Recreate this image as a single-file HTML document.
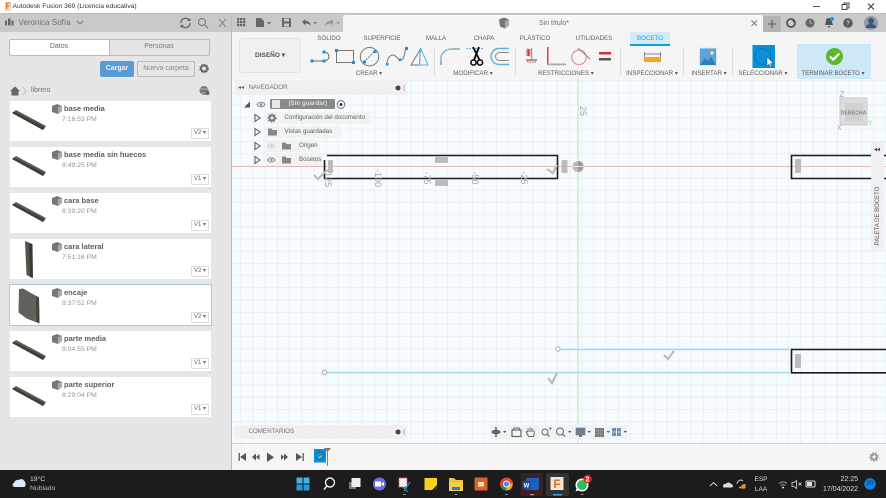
<!DOCTYPE html>
<html lang="es"><head><meta charset="utf-8"><title>Fusion 360</title>
<style>
html,body{margin:0;padding:0;width:886px;height:498px;overflow:hidden;background:#fff}
#r{position:absolute;left:0;top:0;width:886px;height:498px;overflow:hidden;font-family:"Liberation Sans",sans-serif;filter:blur(.3px)}
#r div,#r span.a{position:absolute}
.t{white-space:nowrap;color:#666;font-size:6.5px;line-height:10px}
.c{transform:translateX(-50%)}
.card{left:10px;width:201px;height:40px;background:#fff}
.thumb{position:absolute;left:0;top:0}
.ct{left:54px;top:2.5px;font-size:7.5px;font-weight:bold;color:#5c5c5c;line-height:10px;white-space:nowrap}
.cs{left:52px;top:14px;font-size:6.8px;color:#959595;line-height:10px;white-space:nowrap}
.cv{left:181px;top:27px;width:16px;height:9px;background:#fff;border:1px solid #ddd;font-size:6px;line-height:9px;color:#666;text-align:center;box-sizing:content-box;border-radius:1px}
.cube{left:42px;top:3px}
.lab{top:68.5px;font-size:6.2px;color:#5c5c5c;white-space:nowrap;line-height:10px;transform:translateX(-50%)}
.tab{top:33.5px;font-size:6.2px;color:#5c5c5c;white-space:nowrap;line-height:10px;transform:translateX(-50%)}
.sep{top:47px;width:1px;height:29px;background:#dcdcdc}
.row{height:12px;background:#f1f3f3}
.rt{font-size:6.2px;color:#5c5c5c;line-height:12px;white-space:nowrap}
.ax{font-size:9px;color:#a5a5a5;white-space:nowrap;line-height:10px;transform:translate(-50%,-50%) rotate(90deg)}
svg{position:absolute;overflow:visible}
</style></head><body><div id="r">

<!-- title bar -->
<div style="left:0;top:0;width:886px;height:13px;background:#fff"></div>
<div style="left:5px;top:2px;width:6px;height:9px;background:#f2dcc4;color:#d9731c;font-size:9px;font-weight:bold;line-height:9px;text-align:center">F</div>
<div class="t" style="left:12.5px;top:2px;font-size:6.7px;color:#333">Autodesk Fusion 360 (Licencia educativa)</div>
<svg style="left:0;top:0" width="886" height="13"><path d="M813 6.5h7" stroke="#555" stroke-width="1"/><path d="M842 4.5h5v5h-5zM844 4.500v-1.500h5v5h-2" stroke="#444" fill="none" stroke-width="1"/><path d="M868 3.500l6 6M874 3.500l-6 6" stroke="#333" stroke-width="1"/></svg>
<div style="left:0;top:13px;width:886px;height:1.500px;background:#bdbdbd"></div>

<!-- left panel -->
<div style="left:0;top:14px;width:231px;height:456px;background:#e6e6e6"></div>
<div style="left:0;top:14px;width:231px;height:18px;background:#c9c9c9"></div>
<svg style="left:0;top:14px" width="231" height="18">
<g fill="#666"><rect x="5" y="6.500" width="2" height="5"/><rect x="8" y="4.500" width="2.500" height="7"/><rect x="11.500" y="6.500" width="2" height="5"/></g>
<path d="M77 7l3 3 3-3" stroke="#777" fill="none" stroke-width="1"/>
<path d="M190 9a4.500 4.500 0 0 1-8 3M181 9a4.500 4.500 0 0 1 8-3" stroke="#666" fill="none" stroke-width="1.300"/><path d="M187 7h3.500v-3zM184 11h-3.500v3z" fill="#666"/>
<circle cx="202" cy="8" r="3.500" stroke="#777" fill="none" stroke-width="1"/><path d="M205 11l3 3" stroke="#777" stroke-width="1.200"/>
<path d="M219 5l7 8M226 5l-7 8" stroke="#888" stroke-width="1"/></svg>
<div class="t" style="left:18.500px;top:17.500px;font-size:8px;color:#707070">Veronica Sofía</div>

<div style="left:9px;top:39px;width:101px;height:17px;background:#fff;border:1px solid #bbb;box-sizing:border-box;border-radius:2px 0 0 2px"></div>
<div style="left:109px;top:39px;width:101px;height:17px;background:#e6e6e6;border:1px solid #bbb;box-sizing:border-box;border-radius:0 2px 2px 0"></div>
<div class="t c" style="left:59px;top:42px;color:#666;font-size:7px">Datos</div>
<div class="t c" style="left:159px;top:42px;color:#777;font-size:7px">Personas</div>
<div style="left:100px;top:61px;width:34px;height:16px;background:#5b9bd5;border-radius:2px"></div>
<div class="t c" style="left:117px;top:64px;color:#eef;font-size:7px;font-weight:bold">Cargar</div>
<div style="left:137px;top:61px;width:58px;height:16px;border:1px solid #bbb;box-sizing:border-box;border-radius:2px"></div>
<div class="t c" style="left:166px;top:64px;color:#888;font-size:7px">Nueva carpeta</div>
<svg style="left:199px;top:63px" width="12" height="12"><circle cx="5" cy="5.500" r="3" fill="none" stroke="#666" stroke-width="2"/><circle cx="5" cy="5.500" r="4.200" fill="none" stroke="#666" stroke-width="1.200" stroke-dasharray="1.400 1.400"/></svg>
<svg style="left:9px;top:85px" width="40" height="12"><path d="M1 6l5-4.500 5 4.500h-1.500v4.500h-7v-4.500z" fill="#666"/><path d="M14 2l3 4-3 4" stroke="#bbb" fill="none"/></svg>
<div class="t" style="left:31px;top:85.500px;font-size:7px;color:#707070">librero</div>
<svg style="left:199px;top:85px" width="12" height="12"><circle cx="5" cy="5.500" r="4.500" fill="#777"/><path d="M1 4h8M2 8h7" stroke="#ccc" stroke-width=".7"/><circle cx="8.500" cy="8" r="2" fill="#666"/></svg>

<!-- cards -->
<div class="card" style="top:101px"><svg class="thumb" width="50" height="40"><path d="M2 12l4-3 30 16-3 4z" fill="#5b5b52"/><path d="M2 12l31 17 3-4-1 1.500-31-16z" fill="#3e3e39"/></svg><svg class="cube" width="10" height="10"><path d="M0 2l5-2 5 2v5l-4 3-6-2z" fill="#777"/><path d="M6 3l4-1v5l-4 3z" fill="#aaa"/></svg><div class="ct">base media</div><div class="cs">7:16:53 PM</div><div class="cv">V2 ▾</div></div>
<div class="card" style="top:147px"><svg class="thumb" width="50" height="40"><path d="M2 12l4-3 30 16-3 4z" fill="#5b5b52"/><path d="M2 12l31 17 3-4-1 1.500-31-16z" fill="#3e3e39"/></svg><svg class="cube" width="10" height="10"><path d="M0 2l5-2 5 2v5l-4 3-6-2z" fill="#777"/><path d="M6 3l4-1v5l-4 3z" fill="#aaa"/></svg><div class="ct">base media sin huecos</div><div class="cs">8:49:25 PM</div><div class="cv">V1 ▾</div></div>
<div class="card" style="top:193px"><svg class="thumb" width="50" height="40"><path d="M2 12l4-3 30 16-3 4z" fill="#5b5b52"/><path d="M2 12l31 17 3-4-1 1.500-31-16z" fill="#3e3e39"/></svg><svg class="cube" width="10" height="10"><path d="M0 2l5-2 5 2v5l-4 3-6-2z" fill="#777"/><path d="M6 3l4-1v5l-4 3z" fill="#aaa"/></svg><div class="ct">cara base</div><div class="cs">8:39:20 PM</div><div class="cv">V1 ▾</div></div>
<div class="card" style="top:239px"><svg class="thumb" width="50" height="40"><path d="M15 2l7 3 .5 34-6-3z" fill="#55554e"/><path d="M19 4l3.500 1 .5 34-3-1z" fill="#3a3a36"/></svg><svg class="cube" width="10" height="10"><path d="M0 2l5-2 5 2v5l-4 3-6-2z" fill="#777"/><path d="M6 3l4-1v5l-4 3z" fill="#aaa"/></svg><div class="ct">cara lateral</div><div class="cs">7:51:16 PM</div><div class="cv">V2 ▾</div></div>
<div class="card" style="top:285px;outline:1px solid #a9c6e6"><svg class="thumb" width="50" height="40"><path d="M9 4l4-.5 16 9 .5 26-13-5-8-6z" fill="#62625c"/><path d="M26 11l3 1.500 .5 26-3-1.500z" fill="#44443f"/></svg><svg class="cube" width="10" height="10"><path d="M0 2l5-2 5 2v5l-4 3-6-2z" fill="#777"/><path d="M6 3l4-1v5l-4 3z" fill="#aaa"/></svg><div class="ct">encaje</div><div class="cs">8:37:52 PM</div><div class="cv">V2 ▾</div></div>
<div class="card" style="top:331px"><svg class="thumb" width="50" height="40"><path d="M2 12l4-3 30 16-3 4z" fill="#5b5b52"/><path d="M2 12l31 17 3-4-1 1.500-31-16z" fill="#3e3e39"/></svg><svg class="cube" width="10" height="10"><path d="M0 2l5-2 5 2v5l-4 3-6-2z" fill="#777"/><path d="M6 3l4-1v5l-4 3z" fill="#aaa"/></svg><div class="ct">parte media</div><div class="cs">9:04:55 PM</div><div class="cv">V1 ▾</div></div>
<div class="card" style="top:377px"><svg class="thumb" width="50" height="40"><path d="M2 12l4-3 30 16-3 4z" fill="#5b5b52"/><path d="M2 12l31 17 3-4-1 1.500-31-16z" fill="#3e3e39"/></svg><svg class="cube" width="10" height="10"><path d="M0 2l5-2 5 2v5l-4 3-6-2z" fill="#777"/><path d="M6 3l4-1v5l-4 3z" fill="#aaa"/></svg><div class="ct">parte superior</div><div class="cs">8:29:04 PM</div><div class="cv">V1 ▾</div></div>

<!-- top strip -->
<div style="left:231px;top:14px;width:1px;height:456px;background:#bbb"></div>
<div style="left:232px;top:14px;width:654px;height:18px;background:#c9c9c9"></div>
<div style="left:343px;top:15px;width:420px;height:17px;background:#f5f5f5;border-radius:2px 2px 0 0"></div>
<div style="left:232px;top:32px;width:654px;height:47px;background:#f5f5f5"></div>
<svg style="left:232px;top:14px" width="654" height="18">
<g fill="#666"><rect x="5" y="4" width="2.300" height="2.300"/><rect x="8" y="4" width="2.300" height="2.300"/><rect x="11" y="4" width="2.300" height="2.300"/><rect x="5" y="7" width="2.300" height="2.300"/><rect x="8" y="7" width="2.300" height="2.300"/><rect x="11" y="7" width="2.300" height="2.300"/><rect x="5" y="10" width="2.300" height="2.300"/><rect x="8" y="10" width="2.300" height="2.300"/><rect x="11" y="10" width="2.300" height="2.300"/></g>
<path d="M24 4h5l3 3v6h-8z" fill="#666"/><path d="M35 8h4l-2 2.500z" fill="#666"/>
<path d="M50 4h8l1 1v8h-9z" fill="#666"/><rect x="52" y="4.500" width="5" height="3" fill="#c9c9c9"/><rect x="52" y="9.500" width="5" height="3" fill="#c9c9c9"/>
<path d="M70 8l3.500-3v2c3 0 5 1.500 5.500 5-1.500-2-3-2.500-5.500-2.500v2z" fill="#666"/><path d="M81 8h4l-2 2.500z" fill="#777"/>
<path d="M102 8l-3.500-3v2c-3 0-5 1.500-5.500 5 1.500-2 3-2.500 5.500-2.500v2z" fill="#999"/><path d="M104 8h4l-2 2.500z" fill="#999"/>
<rect x="531" y="2" width="18" height="16" fill="#b5b5b5"/><path d="M540 6v8M536 10h8" stroke="#666" stroke-width="1.300"/>
<circle cx="559" cy="9" r="4" fill="none" stroke="#555" stroke-width="1.800"/><path d="M559 5l4 1-1 3z" fill="#555"/>
<circle cx="578" cy="9" r="4.500" fill="#666"/><path d="M578 6v3h2.500" stroke="#c9c9c9" fill="none" stroke-width=".8"/>
<path d="M597 4c2.500 0 3 1.500 3 4l1 3h-8l1-3c0-2.500.5-4 3-4zM596 12h2v1.500h-2z" fill="#555"/><circle cx="600" cy="5" r="2" fill="#1d9be0"/>
<circle cx="616" cy="9" r="4.700" fill="#555"/><text x="616" y="11.500" font-size="7" font-weight="bold" fill="#c9c9c9" text-anchor="middle" font-family="Liberation Sans">?</text>
<circle cx="639" cy="9" r="7" fill="#8b9bb2"/><circle cx="639" cy="7" r="3" fill="#46536a"/><path d="M633.500 14c.5-3 2.500-4 5.500-4s5 1 5.500 4z" fill="#46536a"/>
</svg>
<svg style="left:750px;top:19px" width="10" height="10"><path d="M1.500 1.500l5.500 5.500M7 1.500L1.500 7" stroke="#777" stroke-width="1"/></svg>
<svg style="left:498px;top:17px" width="12" height="12"><path d="M1 2.500l5-2 5 2v6l-4 3-5-2z" fill="#777"/><path d="M7 4l4-1.500v6l-4 3z" fill="#aaa"/></svg>
<div class="t" style="left:539px;top:18.500px;font-size:7px;color:#707070">Sin título*</div>

<!-- tabs -->
<div class="tab" style="left:329px">SÓLIDO</div>
<div class="tab" style="left:382px">SUPERFICIE</div>
<div class="tab" style="left:436px">MALLA</div>
<div class="tab" style="left:484px">CHAPA</div>
<div class="tab" style="left:535px">PLÁSTICO</div>
<div class="tab" style="left:594px">UTILIDADES</div>
<div style="left:630px;top:32px;width:40px;height:14px;background:#d4ebf7"></div>
<div style="left:630px;top:44px;width:40px;height:2px;background:#1c9ad8"></div>
<div class="tab" style="left:650px;color:#22a0e0">BOCETO</div>

<div style="left:239px;top:38px;width:62px;height:35px;background:#f0f0f0;border:1px solid #e6e6e6;box-sizing:border-box;border-radius:3px"></div>
<div class="t c" style="left:270px;top:50.500px;font-size:6.500px;font-weight:bold;color:#555">DISEÑO ▾</div>

<div class="sep" style="left:434px"></div><div class="sep" style="left:515px"></div><div class="sep" style="left:620px"></div><div class="sep" style="left:683px"></div><div class="sep" style="left:732px"></div>

<svg style="left:232px;top:44px" width="654" height="36">
<!-- line + arc -->
<path d="M80 17H92" stroke="#777" fill="none" stroke-width="1.100"/><path d="M92 8a5 4.500 0 0 1 0 9" stroke="#777" fill="none" stroke-width="1.100"/>
<rect x="78.500" y="15.500" width="3" height="3" fill="#1e90e0"/><rect x="90.500" y="15.500" width="3" height="3" fill="#1e90e0"/><rect x="90.500" y="6.500" width="3" height="3" fill="#1e90e0"/>
<!-- rect -->
<rect x="104.500" y="6.500" width="17" height="12" fill="none" stroke="#777"/><rect x="103" y="5" width="3" height="3" fill="#1e90e0"/><rect x="120" y="17" width="3" height="3" fill="#1e90e0"/>
<!-- circle -->
<circle cx="137.500" cy="12.700" r="9.200" fill="none" stroke="#777"/><path d="M132 18l11-11" stroke="#1e90e0" stroke-width="1" stroke-dasharray="2 1"/><rect x="131" y="16.500" width="3" height="3" fill="#1e90e0"/><rect x="141.500" y="6" width="3" height="3" fill="#1e90e0"/>
<!-- spline -->
<path d="M155 21c0-7 3-10 6-10s5 5 8 5 3-5 5-12" fill="none" stroke="#777"/><rect x="166.500" y="14.500" width="2.500" height="2.500" fill="#1e90e0"/><rect x="173" y="3" width="3" height="3" fill="#1e90e0"/><rect x="154" y="19" width="2.500" height="2.500" fill="#1e90e0"/>
<!-- polygon -->
<path d="M179 21l9.500-16L187.500 21z" fill="none" stroke="#777"/><path d="M188.500 4l7.500 17h-8.500z" fill="none" stroke="#5eb1e8"/>
<!-- fillet -->
<path d="M209 21v-7c0-5 5-9 11-9h7" fill="none" stroke="#5eb1e8" stroke-width="1.300"/><path d="M209 21v-3M220 5h8" stroke="#888" stroke-width="1.100"/>
<!-- scissors -->
<path d="M234 4.500h17" stroke="#6cb9ea" stroke-width="1.200" stroke-dasharray="2 1"/><path d="M241 3l6.500 13M247 3l-5 13" stroke="#111" stroke-width="1.900"/><circle cx="241.500" cy="18.500" r="2.600" fill="none" stroke="#111" stroke-width="1.600"/><circle cx="248" cy="18.500" r="2.600" fill="none" stroke="#111" stroke-width="1.600"/>
<!-- offset -->
<path d="M277 4.500h-10a8 8 0 0 0 0 16h10" fill="none" stroke="#5eb1e8" stroke-width="1.400"/><path d="M277 8.500h-9.500a4 4 0 0 0 0 8h9.500" fill="none" stroke="#888"/>
<!-- restrictions -->
<path d="M295 5l3 1-3 1 3 1-3 1 3 1-3 1 3 1" fill="none" stroke="#c33" stroke-width="1"/><rect x="299" y="4" width="1.200" height="11" fill="#999"/><rect x="294" y="15" width="11" height="2" fill="#999"/><path d="M295 18h9" stroke="#c33" stroke-dasharray="1.500 1"/>
<rect x="315" y="3" width="1.500" height="18" fill="#c44"/><rect x="315" y="19.500" width="19" height="1.800" fill="#aaa"/>
<circle cx="347" cy="13.300" r="7.200" fill="none" stroke="#d88" stroke-width="1.100"/><path d="M346 4l12 11" stroke="#888"/>
<rect x="367" y="8" width="12" height="2.500" fill="#c33"/><rect x="367" y="14" width="12" height="2.500" fill="#555"/>
<!-- inspect -->
<rect x="412" y="13" width="17" height="5" fill="#f2a921"/><path d="M412.500 8v5M428.500 8v5M413 10h15" stroke="#666" stroke-width=".8"/>
<!-- insert -->
<rect x="467.500" y="4" width="17" height="17.500" fill="#58a5de" stroke="#d6e6f2"/><circle cx="480" cy="9" r="1.800" fill="#ffe27a"/><path d="M468 21l5-7 3 3 3-4 5 8z" fill="#2f7eb8"/>
<!-- select -->
<rect x="520.500" y="1" width="22.500" height="23" fill="#0a8fd8"/><circle cx="530.700" cy="12.700" r="8" fill="none" stroke="#0a6a96" stroke-dasharray="1.500 1"/><path d="M535 13v9l2-2 1.500 3 1.200-.5-1.400-3h3z" fill="#fff" stroke="#333" stroke-width=".4"/>
</svg>
<div style="left:797px;top:44px;width:74px;height:35px;background:#cde8f6"></div>
<svg style="left:826px;top:48px" width="17" height="17"><circle cx="8.500" cy="8.500" r="8.500" fill="#5cb82c"/><path d="M4 8.500l3.200 3.200 6-6" stroke="#fff" stroke-width="2.200" fill="none"/></svg>

<div class="lab" style="left:369px">CREAR ▾</div>
<div class="lab" style="left:473px">MODIFICAR ▾</div>
<div class="lab" style="left:566px">RESTRICCIONES ▾</div>
<div class="lab" style="left:652px">INSPECCIONAR ▾</div>
<div class="lab" style="left:709px">INSERTAR ▾</div>
<div class="lab" style="left:763px">SELECCIONAR ▾</div>
<div class="lab" style="left:833px;font-size:6px">TERMINAR BOCETO ▾</div>

<!-- canvas -->
<div style="left:232px;top:79px;width:654px;height:364px;background-color:#f5fbfe"></div>
<svg style="left:232px;top:79px" width="654" height="364">
<defs><pattern id="g" x="-3.500" y="-10.500" width="48.700" height="48.700" patternUnits="userSpaceOnUse">
<path d="M0 0V49M12.200 0V49M24.400 0V49M36.500 0V49M0 0H49M0 12.200H49M0 24.400H49M0 36.500H49" stroke="#e8f0f3" stroke-width="1" fill="none"/><path d="M0 0V49M0 0H49" stroke="#dfe8eb" stroke-width="1" fill="none"/></pattern></defs>
<rect width="654" height="364" fill="url(#g)"/>
<path d="M0 87.500H654" stroke="#eab7b7" stroke-width="1"/>
<path d="M346 0V364" stroke="#b5e3b5" stroke-width="1"/>
<!-- sketch -->
<path d="M95 76.500H325.500V99.500H92.500V81" fill="none" stroke="#1a1a1a" stroke-width="1.600"/>
<path d="M654 76.500H559.500V99.500H654" fill="none" stroke="#1a1a1a" stroke-width="1.600"/>
<path d="M654 270.500H559.500V293.800H654" fill="none" stroke="#1a1a1a" stroke-width="1.600"/>
<path d="M329 270.500H559" stroke="#a9d9f0" stroke-width="1.400"/>
<path d="M95 293.500H559" stroke="#a9d9f0" stroke-width="1.400"/>
<circle cx="326" cy="270" r="2.200" fill="#f5fbfe" stroke="#aaa"/>
<circle cx="92.500" cy="293.500" r="2.200" fill="#f5fbfe" stroke="#aaa"/>
<circle cx="346" cy="87.500" r="5.500" fill="#bbb"/><path d="M346 82a5.500 5.500 0 0 1 0 11z" fill="#999"/><path d="M340.500 87.500h11" stroke="#e8e8e8"/>
<!-- constraint glyphs -->
<g fill="#bbb">
<rect x="96" y="81" width="5" height="13" rx="1"/><rect x="203" y="78" width="13" height="6" rx="1"/><rect x="203" y="101" width="13" height="6" rx="1"/><rect x="329.500" y="81" width="6" height="13" rx="1"/><rect x="563" y="80" width="6" height="14" rx="1"/><rect x="563" y="275" width="6" height="14" rx="1"/>
</g>
<g stroke="#bbb" stroke-width="2.200" fill="none">
<path d="M82 96l4 4 9-9"/>
<path d="M315 90l6 4 4-8"/>
<path d="M432 276l4 4 6-8"/>
<path d="M316 299l4 5 5-10"/>
</g>
</svg>
<div class="ax" style="left:328px;top:178px">-125</div>
<div class="ax" style="left:378px;top:178px">-100</div>
<div class="ax" style="left:427px;top:178px">-75</div>
<div class="ax" style="left:475px;top:178px">-50</div>
<div class="ax" style="left:524px;top:178px">-25</div>
<div class="ax" style="left:583px;top:111px">25</div>

<!-- navigator -->
<div style="left:235px;top:81px;width:172px;height:14px;background:#f0f0f0;border-radius:2px"></div>
<div class="t" style="left:248.500px;top:83px;font-size:6.200px;color:#707070">NAVEGADOR</div>
<div class="t" style="left:238px;top:83px;font-size:6px;color:#666">◂◂</div>
<svg style="left:393px;top:84px" width="12" height="8"><circle cx="5" cy="4" r="2.500" fill="#444"/><rect x="10" y="1" width="1.500" height="6" fill="#ccc"/></svg>

<svg style="left:240px;top:97px" width="115" height="70">
<path d="M4 10.500l6-6v6z" fill="#555"/><path d="M17 7.500c2-3 6-3 8 0-2 3-6 3-8 0z" fill="none" stroke="#888"/><circle cx="21" cy="7.500" r="1.300" fill="#888"/>
</svg>
<div style="left:270px;top:99px;width:65px;height:10px;background:#8a8a8a;border-radius:1px"></div>
<div style="left:272px;top:100px;width:8px;height:8px;background:#e8e8e8"></div>
<div class="t" style="left:288.500px;top:99px;font-size:6.200px;font-weight:bold;color:#ddd">(Sin guardar)</div>
<svg style="left:336px;top:99px" width="11" height="11"><circle cx="5" cy="5.500" r="3.800" fill="#fff" stroke="#555" stroke-width=".8"/><circle cx="5" cy="5.500" r="1.500" fill="#333"/></svg>

<div class="row" style="left:266px;top:112px;width:104px"></div>
<div class="rt" style="left:284.500px;top:112px">Configuración del documento</div>
<div class="row" style="left:266px;top:126px;width:75px"></div>
<div class="rt" style="left:284.500px;top:126px">Vistas guardadas</div>
<div class="row" style="left:266px;top:140px;width:54px"></div>
<div class="rt" style="left:299px;top:140px">Origen</div>
<div class="row" style="left:266px;top:154px;width:56px"></div>
<div class="rt" style="left:299px;top:154px">Bocetos</div>
<svg style="left:252px;top:110px" width="60" height="56">
<g fill="#f5fbfe" stroke="#555" stroke-width="1"><path d="M3 4.500l5 3.500-5 3.500z"/><path d="M3 18.500l5 3.500-5 3.500z"/><path d="M3 32.500l5 3.500-5 3.500z"/><path d="M3 46.500l5 3.500-5 3.500z"/></g>
<circle cx="20" cy="8" r="2.500" fill="none" stroke="#777" stroke-width="2"/><circle cx="20" cy="8" r="4" fill="none" stroke="#777" stroke-width="1.200" stroke-dasharray="1.500 1.500"/>
<path d="M16 18.500h3.500l1 1.500h4.500v5.500h-9z" fill="#888"/>
<path d="M15.500 36c2-2.700 5.500-2.700 7.500 0-2 2.700-5.500 2.700-7.500 0z" fill="none" stroke="#ccc"/><circle cx="19.500" cy="36" r="1.100" fill="#ccc"/>
<path d="M30 32.500h3.500l1 1.500h4.500v5.500h-9z" fill="#888"/>
<path d="M15.500 50c2-2.700 5.500-2.700 7.500 0-2 2.700-5.500 2.700-7.500 0z" fill="none" stroke="#888"/><circle cx="19.500" cy="50" r="1.100" fill="#888"/>
<path d="M30 46.500h3.500l1 1.500h4.500v5.500h-9z" fill="#888"/>
</svg>

<!-- viewcube -->
<svg style="left:836px;top:88px" width="50" height="52">
<rect x="4" y="10" width="27" height="27" fill="#dcdcdc" stroke="#ccc"/><rect x="9" y="15" width="18" height="18" fill="#d0d0d0"/>
<text x="17.500" y="26.500" font-size="5.200" font-weight="bold" fill="#888" text-anchor="middle" font-family="Liberation Sans">DERECHA</text>
<text x="6" y="9" font-size="8" fill="#9a9aee" text-anchor="middle" font-family="Liberation Sans">Z</text>
<text x="32" y="37" font-size="7" fill="#8fe08f" font-family="Liberation Sans">Y</text>
<text x="1" y="42" font-size="7" fill="#ee8f8f" font-family="Liberation Sans">X</text>
</svg>

<!-- palette -->
<div style="left:871px;top:142px;width:13px;height:109px;background:#f0f0f0"></div>
<div class="t" style="left:874px;top:145px;font-size:6px;color:#333">◂◂</div>
<div class="t" style="left:878px;top:216px;font-size:6px;color:#555;transform:translate(-50%,-50%) rotate(-90deg)">PALETA DE BOCETO</div>

<!-- comments -->
<div style="left:235px;top:425px;width:172px;height:14px;background:#f0f0f0;border-radius:2px"></div>
<div class="t" style="left:248.500px;top:427px;font-size:6.200px;color:#707070">COMENTARIOS</div>
<svg style="left:393px;top:428px" width="12" height="8"><circle cx="5" cy="4" r="2.500" fill="#444"/><rect x="10" y="1" width="1.500" height="6" fill="#ccc"/></svg>

<!-- view bar -->
<div style="left:490px;top:425px;width:138px;height:14px;background:#f0f3f4"></div>
<svg style="left:490px;top:425px" width="140" height="14">
<path d="M6 2v10M2 7h8" stroke="#555" stroke-width="1.400"/><ellipse cx="6" cy="7" rx="4" ry="1.600" fill="none" stroke="#555"/><path d="M13 6h3.500l-1.750 2z" fill="#555"/>
<rect x="22" y="5" width="9" height="6.500" fill="none" stroke="#666" stroke-width="1.200"/><path d="M23 5l1-2h5l1 2" fill="none" stroke="#666"/>
<path d="M38 7v-3.500M40 7V2.500M42 7V3M44 7.500V5M38 7c-1-1-2-.5-1.500.5l2 4h5l1-4" fill="none" stroke="#666"/>
<circle cx="55" cy="7" r="3" fill="none" stroke="#666"/><path d="M57 9l2.500 2.500" stroke="#666" stroke-width="1.200"/><path d="M59 3.500h2.500M60.300 2.200v2.600" stroke="#555" stroke-width=".8"/>
<circle cx="70" cy="6.500" r="3.500" fill="none" stroke="#666"/><path d="M72.500 9l2.500 2.500" stroke="#666" stroke-width="1.200"/><path d="M78 6h3.500l-1.750 2z" fill="#555"/>
<rect x="86" y="3" width="9" height="7" fill="#6d7f92" stroke="#777" stroke-width=".6"/><path d="M89 12h3v-2h-3z" fill="#777"/><path d="M97.500 6H101l-1.750 2z" fill="#555"/>
<rect x="105" y="3" width="9" height="9" fill="#777"/><path d="M105 6h9M105 9h9M108 3v9M111 3v9" stroke="#aaa" stroke-width=".5"/><path d="M116.500 6H120l-1.750 2z" fill="#555"/>
<rect x="122" y="3" width="9" height="8" fill="#6d8fb2"/><path d="M126.500 3v8M122 7h9" stroke="#f0f3f4" stroke-width=".8"/><path d="M133.500 6H137l-1.750 2z" fill="#555"/>
</svg>

<!-- timeline -->
<div style="left:232px;top:443px;width:654px;height:27px;background:#f5f5f5;border-top:1px solid #d0d0d0;box-sizing:border-box"></div>
<svg style="left:232px;top:448px" width="110" height="20">
<g fill="#555"><rect x="6.500" y="5" width="1.300" height="8"/><path d="M14 5v8l-6-4z"/><path d="M20 9l4-3.500v7zM24 9l3.500-3v6z"/><path d="M35 4.500v9.500l7-4.750z"/><path d="M49 6l3 3-3 3zM52 5.500l4 3.500-4 3.500z"/><path d="M64 5v8l6-4z"/><rect x="70.500" y="5" width="1.300" height="8"/></g>
<rect x="82" y="1" width="12" height="13.500" fill="#0a8fd8"/><circle cx="88" cy="7.500" r="4" fill="none" stroke="#0a6a96" stroke-dasharray="1.500 1"/><path d="M86.500 10l3-2" stroke="#f2a921" stroke-width="1.500"/><path d="M92 0h7l-3.500 4z" fill="#777"/><path d="M95.500 3v15" stroke="#777" stroke-width=".9"/>
</svg>
<svg style="left:868px;top:451px" width="12" height="12"><circle cx="6" cy="6" r="2.600" fill="none" stroke="#999" stroke-width="2"/><circle cx="6" cy="6" r="4.200" fill="none" stroke="#999" stroke-width="1.400" stroke-dasharray="1.500 1.500"/></svg>

<!-- taskbar -->
<div style="left:0;top:470px;width:886px;height:28px;background:#1c1c1c"></div>
<svg style="left:0;top:470px" width="886" height="28">
<path d="M14 11c.5-2.500 3-3.500 5-3 1.500-1.500 5-1 6 2 1 .5 1 5-1 5H15c-3 0-3-4-1-4z" fill="#dbe9f5" transform="translate(0 2)"/>
<!-- windows -->
<g fill="#3db4ec"><rect x="296.500" y="7.500" width="6" height="6"/><rect x="303.500" y="7.500" width="6" height="6"/><rect x="296.500" y="14.500" width="6" height="6" fill="#2299dc"/><rect x="303.500" y="14.500" width="6" height="6" fill="#2299dc"/></g>
<circle cx="330" cy="12.500" r="4.500" fill="none" stroke="#eee" stroke-width="1.400"/><path d="M327 16l-3 3.500" stroke="#eee" stroke-width="1.500"/>
<!-- task view -->
<rect x="349" y="12" width="7" height="7" fill="#777"/><rect x="351.500" y="8" width="9" height="9" fill="#eee"/>
<!-- meet -->
<circle cx="379.500" cy="14" r="6.500" fill="#6a6ce0"/><path d="M375 11.500h6v5h-6zM381.500 13.500l2.500-1.500v4l-2.500-1.500z" fill="#fff"/>
<!-- snip -->
<rect x="399" y="8" width="8" height="9" fill="#eee" stroke="#d66" stroke-width="1" stroke-dasharray="2 1"/><path d="M404 21l6-9M403 17l5 5" stroke="#2a8bc7" stroke-width="1.200"/>
<!-- sticky -->
<rect x="424.500" y="8" width="12.500" height="12" fill="#f6d21a"/><path d="M437 15v5h-5z" fill="#333"/>
<!-- folder -->
<path d="M449 8h5l2 2h7v4h-14z" fill="#f1c232"/><rect x="449" y="12" width="14" height="9" fill="#f6cf4a"/><rect x="452" y="17" width="8" height="3" fill="#1f7fc8"/>
<!-- camera -->
<rect x="474.500" y="7.500" width="13" height="13" fill="#d9622b"/><rect x="478" y="12" width="6" height="4.500" fill="#f4d6c6"/>
<!-- chrome -->
<circle cx="506.500" cy="14" r="6.500" fill="#db4437"/><path d="M506.500 14L501 17.500a6.500 6.500 0 0 0 5.500 3l3-6.500z" fill="#0f9d58"/><path d="M506.500 14l6-.5a6.500 6.500 0 0 1-6 7z" fill="#f4b400"/><circle cx="506.500" cy="14" r="3" fill="#4285f4" stroke="#eee"/>
<!-- word -->
<rect x="520.500" y="3" width="22.500" height="23" rx="2" fill="#3a2222"/><rect x="526" y="8" width="13" height="12" fill="#1f5fbf"/><rect x="522.500" y="11" width="8" height="8" fill="#174a99"/><text x="526.500" y="17.500" font-size="6" font-weight="bold" fill="#fff" text-anchor="middle" font-family="Liberation Sans">W</text><rect x="530" y="24" width="4" height="1.200" fill="#d98a8a"/>
<!-- fusion -->
<rect x="546" y="3" width="23" height="23" rx="2" fill="#333"/><rect x="550.500" y="7" width="13" height="13" fill="#f6e3d2"/><text x="557" y="18" font-size="12" font-weight="bold" fill="#d9731c" text-anchor="middle" font-family="Liberation Sans">F</text><rect x="553" y="24" width="9" height="1.500" fill="#3aa0e8"/>
<!-- whatsapp -->
<circle cx="582" cy="15" r="6.500" fill="#fff"/><circle cx="582" cy="15" r="5" fill="#2fbf5b"/><path d="M575.500 21.500l1.500-4 2.500 2.500z" fill="#fff"/><circle cx="587.500" cy="9" r="4.200" fill="#e02020"/><text x="587.500" y="11.500" font-size="7" font-weight="bold" fill="#fff" text-anchor="middle" font-family="Liberation Sans">2</text>
<g fill="#888"><rect x="403" y="24" width="3" height="1"/><rect x="454.500" y="24" width="3" height="1"/><rect x="505" y="24" width="3" height="1"/><rect x="580.500" y="24" width="3" height="1"/></g>
<!-- tray -->
<path d="M710 16l3.500-3.500L717 16" fill="none" stroke="#ddd" stroke-width=".9"/>
<path d="M723 16c0-2 2-2.500 3-2 1-2 4-2 5 0 2 0 2.500 3 1 3.500h-8c-1 0-1-1-1-1.500z" fill="#ddd"/>
<path d="M737 14c0-2.500 2-4 4-4l2 1M745 14c0 2.500-2 4-4 4l-2-1" stroke="#ccc" fill="none" stroke-width="1"/><circle cx="743.500" cy="16.500" r="2.300" fill="#ed8b1e"/>
<path d="M779 13.500c2.500-2 5.500-2 8 0M780.500 15.500c1.500-1 3.500-1 5 0" stroke="#999" fill="none"/><circle cx="783" cy="17.500" r="1" fill="#eee"/>
<path d="M792 12.500h2l2.500-2v8l-2.500-2h-2z" fill="none" stroke="#ddd" stroke-width=".8"/><path d="M798.500 12.500l3 3M801.500 12.500l-3 3" stroke="#ddd" stroke-width=".8"/>
<rect x="806" y="11" width="9" height="6" rx="1" fill="none" stroke="#ddd"/><rect x="807" y="12" width="5" height="4" fill="#ddd"/>
<circle cx="870" cy="14" r="5.700" fill="#0a84e8"/>
</svg>
<div class="t" style="left:30px;top:474.500px;font-size:6.800px;color:#ddd">19°C</div>
<div class="t" style="left:30px;top:484px;font-size:6.800px;color:#bbb">Nublado</div>
<div class="t c" style="left:761px;top:474.500px;font-size:6.500px;color:#ddd">ESP</div>
<div class="t c" style="left:761px;top:484.500px;font-size:6.500px;color:#ddd">LAA</div>
<div class="t" style="right:28px;top:474.500px;font-size:7px;color:#ddd;text-align:right">22:25</div>
<div class="t" style="right:28px;top:484.500px;font-size:7px;color:#ddd;text-align:right">17/04/2022</div>
<div class="t c" style="left:870px;top:479px;font-size:6px;color:#05254a">20</div>

</div></body></html>
